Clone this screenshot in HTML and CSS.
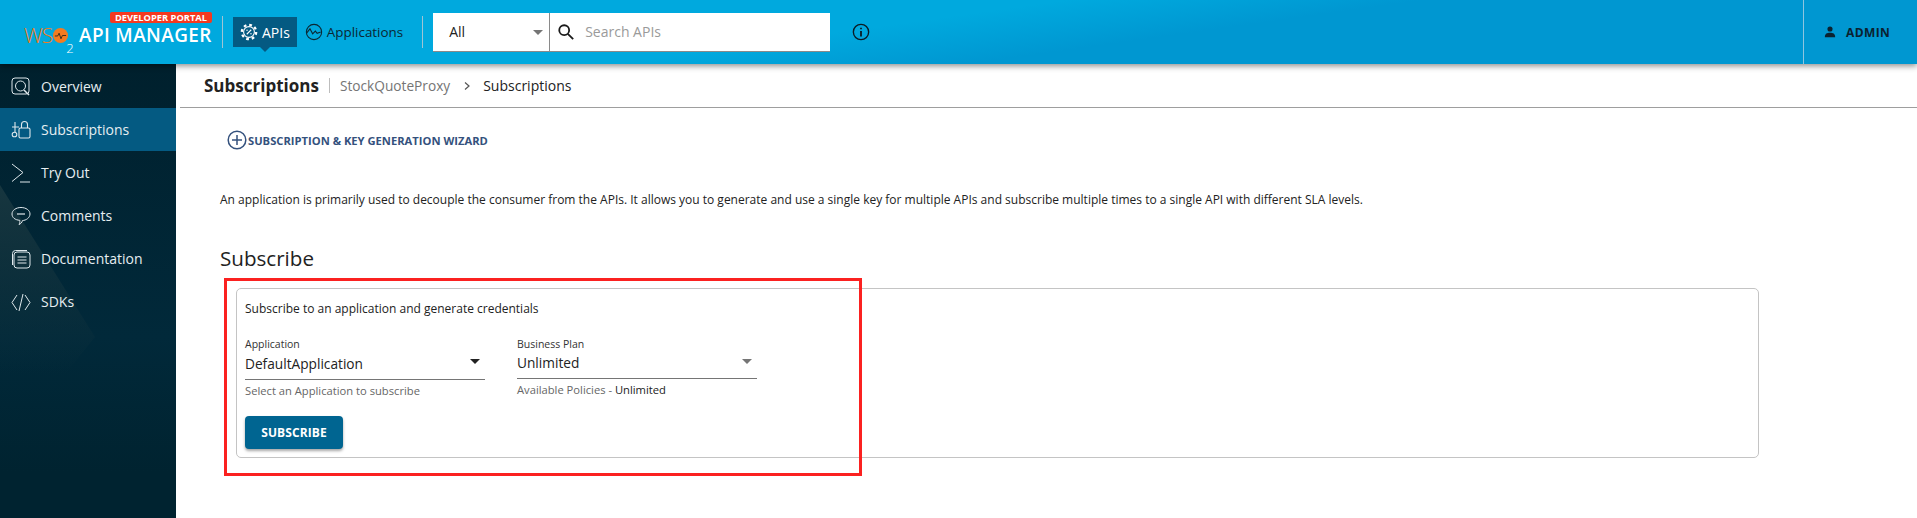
FILE: index.html
```html
<!DOCTYPE html>
<html lang="en">

<head>
    <meta charset="UTF-8">
    <title>Subscriptions</title>
    <link rel="stylesheet" href="styles.css">
</head>

<body>
    <header class="topbar">
        <div class="logo">
            <span class="logo-wso">WS<svg class="logo-o" viewBox="0 0 16 16"><circle cx="8" cy="8" r="8" fill="#f47b20"/><path d="M2 8.500h3l1.500-3 2 6 1.500-3.500h4" fill="none" stroke="#3b2a1a" stroke-width="1"/></svg><sub>2</sub></span>
            <span class="logo-name">API MANAGER</span>
            <span class="logo-badge">DEVELOPER PORTAL</span>
        </div>
        <div class="sep"></div>
        <a class="nav-item active">
            <svg viewBox="0 0 20 20" width="18" height="18" fill="none" stroke="#fff"><circle cx="10" cy="10" r="8" stroke-width="2.500" stroke-dasharray="3.100 3.180"/><circle cx="10" cy="10" r="6" stroke-width="1.200"/><path d="M7.500 12.500l5-5" stroke-width="1.200"/><circle cx="7.800" cy="8" r=".8" fill="#fff" stroke="none"/><circle cx="12.200" cy="12" r=".8" fill="#fff" stroke="none"/></svg>
            APIs
        </a>
        <a class="nav-item nav-apps">
            <svg viewBox="0 0 20 20" width="18" height="18" fill="none" stroke="#0b2733" stroke-width="1.200"><circle cx="10" cy="10" r="8.500"/><path d="M2 11l3.500-4.500 3 5.500 3-3 2 2.500 4-1.500"/></svg>
            Applications
        </a>
        <div class="sep sep-right"></div>
        <div class="search">
            <div class="search-select">All<span class="caret caret-grey"></span></div>
            <div class="search-input">
                <svg viewBox="0 0 20 20" width="18" height="18" fill="none" stroke="#1a1a1a" stroke-width="2"><circle cx="8" cy="8" r="5.500"/><path d="M12 12l6 6"/></svg>
                <span>Search APIs</span>
            </div>
        </div>
        <svg class="info" viewBox="0 0 20 20" width="18" height="18" fill="none" stroke="#0b1c24" stroke-width="1.500"><circle cx="10" cy="10" r="8.500"/><path d="M10 9v6M10 5.200v1.800" stroke-width="2"/></svg>
        <div class="user">
            <svg viewBox="0 0 14 14" width="12" height="12" fill="#0b2230"><circle cx="7" cy="3.500" r="3"/><path d="M1 13c0-4 2.500-5 6-5s6 1 6 5z"/></svg>
            ADMIN
        </div>
    </header>

    <div class="page">
        <nav class="sidebar">
            <a class="side-item">
                <svg viewBox="0 0 20 20" width="20" height="20" fill="none" stroke="#dfe8ec" stroke-width="1"><rect x="1" y="1" width="17" height="16" rx="3"/><circle cx="9.500" cy="9" r="5"/><path d="M13 13l5 5" stroke-width="1.500"/></svg>
                Overview
            </a>
            <a class="side-item active">
                <svg viewBox="0 0 20 20" width="20" height="20" fill="none" stroke="#dfe8ec" stroke-width="1.100"><rect x="8" y="8" width="11" height="10" rx="1.500"/><path d="M10.500 8V4.500a3 3 0 0 1 6 0V8"/><path d="M4 2v10M1 7h7"/><circle cx="3.500" cy="14.500" r="2.300"/></svg>
                Subscriptions
            </a>
            <a class="side-item">
                <svg viewBox="0 0 20 20" width="20" height="20" fill="none" stroke="#dfe8ec" stroke-width="1"><path d="M1 1l11 8.500L1 18.500M9 19h10"/></svg>
                Try Out
            </a>
            <a class="side-item">
                <svg viewBox="0 0 20 20" width="20" height="20" fill="none" stroke="#dfe8ec" stroke-width="1"><path d="M10 1.500c5 0 9 2.800 9 6.500s-4 6.500-7.500 6.500c-.5 2-2 3.500-3.500 4 .8-1.500 1-2.800.8-4.200C4 14 1 11.500 1 8c0-3.700 4-6.500 9-6.500z"/><path d="M6 8h8" stroke-width="1.200"/></svg>
                Comments
            </a>
            <a class="side-item">
                <svg viewBox="0 0 20 20" width="20" height="20" fill="none" stroke="#dfe8ec" stroke-width="1"><rect x="3" y="3" width="16" height="16" rx="3"/><path d="M1.500 16V4.500a3 3 0 0 1 3-3H16"/><path d="M6.500 8h9M6.500 11h9M6.500 14h9" stroke-width="1.200"/></svg>
                Documentation
            </a>
            <a class="side-item">
                <svg viewBox="0 0 20 20" width="20" height="20" fill="none" stroke="#dfe8ec" stroke-width="1"><path d="M6 3l-5 7.500L6 18M14 3l5 7.500L14 18M12 2L8 19"/></svg>
                SDKs
            </a>
        </nav>

        <main class="main">
            <div class="crumbs">
                <span class="crumb-title">Subscriptions</span>
                <span class="crumb-link">StockQuoteProxy</span>
                <svg viewBox="0 0 10 10" width="10" height="10" fill="none" stroke="#555" stroke-width="1.200"><path d="M3 1.500L7 5 3 8.500"/></svg>
                <span class="crumb-now">Subscriptions</span>
            </div>

            <div class="content">
                <a class="wizard">
                    <svg viewBox="0 0 20 20" width="20" height="20" fill="none" stroke="#34517d" stroke-width="1.500"><circle cx="10" cy="10" r="8.800"/><path d="M5 10h10M10 5v10"/></svg>
                    SUBSCRIPTION &amp; KEY GENERATION WIZARD
                </a>
                <p class="intro">An application is primarily used to decouple the consumer from the APIs. It allows you to generate and use a single key for multiple APIs and subscribe multiple times to a single API with different SLA levels.</p>
                <h2>Subscribe</h2>
                <section class="card">
                    <p class="card-title">Subscribe to an application and generate credentials</p>
                    <div class="fields">
                        <div class="field">
                            <label>Application</label>
                            <div class="value value-app">DefaultApplication<span class="caret"></span></div>
                            <p class="hint">Select an Application to subscribe</p>
                        </div>
                        <div class="field field-plan">
                            <label>Business Plan</label>
                            <div class="value">Unlimited<span class="caret caret-grey"></span></div>
                            <p class="hint">Available Policies - <span class="hint-dark">Unlimited</span></p>
                        </div>
                    </div>
                    <button class="subscribe">SUBSCRIBE</button>
                </section>
                <div class="highlight"></div>
            </div>
        </main>
    </div>
</body>

</html>
```

FILE: styles.css
```css
* {
    box-sizing: border-box;
}

html,
body {
    height: 518px;
    margin: 0;
    overflow: hidden;
}

body {
    font-family: "Open Sans", "Noto Sans", sans-serif;
    font-size: 14px;
    color: #222;
    background: #fff;
}

.topbar {
    position: relative;
    z-index: 2;
    display: flex;
    align-items: center;
    height: 64px;
    padding-left: 24px;
    background: linear-gradient(172deg, #00a9de 0%, #00a9de 45%, #0097d1 60%, #0097d1 100%);
    box-shadow: 0 2px 6px rgba(0, 0, 0, .45);
}

.logo {
    position: relative;
    display: flex;
    align-items: center;
    width: 198px;
    height: 36px;
    padding-top: 6px;
}

.logo-wso {
    display: flex;
    align-items: center;
    flex: none;
    width: 54px;
    font-size: 21px;
    font-weight: 300;
    letter-spacing: -1px;
    color: #f47b20;
}

.logo-o {
    width: 15px;
    height: 15px;
    margin-left: 1px;
    flex: none;
}

.logo-wso sub {
    align-self: flex-end;
    margin: 0 0 -6px -2px;
    font-size: 13px;
    line-height: 13px;
    letter-spacing: 0;
    color: #fff;
}

.logo-name {
    margin-left: 1px;
    font-size: 18.900px;
    font-weight: 600;
    letter-spacing: .4px;
    line-height: 24px;
    color: #fff;
    white-space: nowrap;
}

.logo-badge {
    position: absolute;
    top: -2px;
    left: 86px;
    width: 102px;
    height: 11px;
    border-radius: 2px;
    background: #f5391f;
    font-size: 9.300px;
    font-weight: 700;
    line-height: 11px;
    text-align: center;
    color: #fff;
    white-space: nowrap;
}

.sep {
    width: 1px;
    height: 32px;
    background: #9fc4d4;
}

.nav-item {
    display: flex;
    align-items: center;
    gap: 4px;
    height: 30px;
    font-size: 14px;
    color: #0b2733;
}

.topbar .nav-item {
    margin-left: 10px;
    padding: 0 7px;
}

.topbar .nav-item + .nav-item {
    margin-left: 0;
    padding: 0 7px 0 8px;
}

.nav-apps {
    font-size: 13.400px;
}

.topbar .nav-item.active {
    position: relative;
    background: #045a82;
    color: #fff;
}

.topbar .nav-item.active::after {
    content: "";
    position: absolute;
    left: 50%;
    bottom: -5px;
    margin-left: -5px;
    border-left: 5px solid transparent;
    border-right: 5px solid transparent;
    border-top: 5px solid #045a82;
}

.sep-right {
    margin-left: 12px;
}

.search {
    display: flex;
    height: 39px;
    margin-left: 10px;
    border-bottom: 1px solid #8a8a8a;
    background: #fff;
}

.search-select {
    position: relative;
    display: flex;
    align-items: center;
    width: 117px;
    padding-left: 16px;
    border-right: 1px solid #8a8a8a;
    font-size: 14px;
}

.search-select .caret {
    right: 6px;
    top: 17px;
}

.search-input {
    display: flex;
    align-items: center;
    gap: 10px;
    width: 280px;
    padding-left: 7px;
    color: #9a9a9a;
}

.caret {
    position: absolute;
    border-left: 5px solid transparent;
    border-right: 5px solid transparent;
    border-top: 5px solid #222;
}

.caret-grey {
    border-top-color: #757575;
}

.info {
    margin-left: 22px;
}

.user {
    display: flex;
    align-items: center;
    gap: 10px;
    height: 64px;
    margin-left: auto;
    padding-left: 20px;
    width: 114px;
    border-left: 1px solid #8ec5df;
    font-size: 12px;
    font-weight: 700;
    letter-spacing: .4px;
    color: #0b2230;
}

.page {
    display: flex;
    height: 454px;
}

.sidebar {
    position: relative;
    flex: none;
    width: 176px;
    padding-top: 1px;
    background: linear-gradient(180deg, #00202d 0%, #01293a 60%, #002330 90%);
}

/* faint triangle in the sidebar background */
.sidebar::before {
    content: "";
    position: absolute;
    left: 0;
    top: 121px;
    width: 95px;
    height: 270px;
    background: linear-gradient(180deg, #17363f 0%, rgba(23, 54, 63, 0) 70%);
    clip-path: polygon(0 0, 95px 152px, 0 270px);
}

.side-item {
    position: relative;
    display: flex;
    align-items: center;
    gap: 10px;
    height: 43px;
    padding-left: 11px;
    font-size: 14px;
    color: #e6eef1;
}

.side-item.active {
    background: #045a82;
}

.main {
    flex: 1;
    min-width: 0;
    padding-left: 4px;
}

.crumbs {
    display: flex;
    align-items: center;
    height: 44px;
    padding-left: 24px;
    border-bottom: 1px solid #9e9e9e;
}

.crumb-title {
    padding-right: 10px;
    border-right: 1px solid #bdbdbd;
    font-size: 17px;
    font-weight: 700;
    line-height: 15px;
}

.crumb-link {
    margin-left: 10px;
    margin-right: 12px;
    font-size: 13.700px;
    color: #757575;
}

.crumb-now {
    margin-left: 11px;
}

.content {
    position: relative;
    padding: 22px 0 0 40px;
}

.wizard {
    display: flex;
    align-items: center;
    gap: 1px;
    height: 20px;
    margin-left: 7px;
    font-size: 11.200px;
    font-weight: 700;
    color: #34517d;
}

.intro {
    margin: 41px 0 0;
    font-size: 12px;
    line-height: 18px;
    color: #222;
}

h2 {
    margin: 33px 0 0;
    font-size: 20.600px;
    font-weight: 400;
    line-height: 32px;
}

.card {
    width: 1523px;
    height: 170px;
    margin: 14px 0 0 16px;
    padding: 11px 8px;
    border: 1px solid #c4c4c4;
    border-radius: 5px;
}

.card-title {
    margin: 0;
    font-size: 12px;
    line-height: 18px;
}

.fields {
    display: flex;
    gap: 32px;
    margin-top: 19px;
}

.field {
    width: 240px;
}

.field label {
    display: block;
    font-size: 10.500px;
    line-height: 14px;
    color: #333;
}

.value {
    position: relative;
    height: 29px;
    padding-top: 2px;
    border-bottom: 1px solid #757575;
    font-size: 13.700px;
    line-height: 20px;
}

.value-app {
    padding-top: 3px;
}

.value .caret {
    right: 5px;
    top: 8px;
}

.hint {
    margin: 4px 0 0;
    font-size: 11.200px;
    line-height: 14px;
    color: #666;
}

.field-plan .value {
    height: 28px;
}

.hint-dark {
    color: #222;
}

.subscribe {
    display: block;
    width: 98px;
    height: 33px;
    margin-top: 18px;
    padding: 0;
    border: 0;
    border-radius: 4px;
    background: #006591;
    box-shadow: 0 2px 3px rgba(0, 0, 0, .35);
    font-family: inherit;
    font-size: 12px;
    font-weight: 700;
    letter-spacing: .1px;
    color: #fff;
}

/* red annotation drawn on top of the screenshot */
.highlight {
    position: absolute;
    left: 44px;
    top: 170px;
    width: 638px;
    height: 198px;
    border: 3px solid #fb2120;
}
```
